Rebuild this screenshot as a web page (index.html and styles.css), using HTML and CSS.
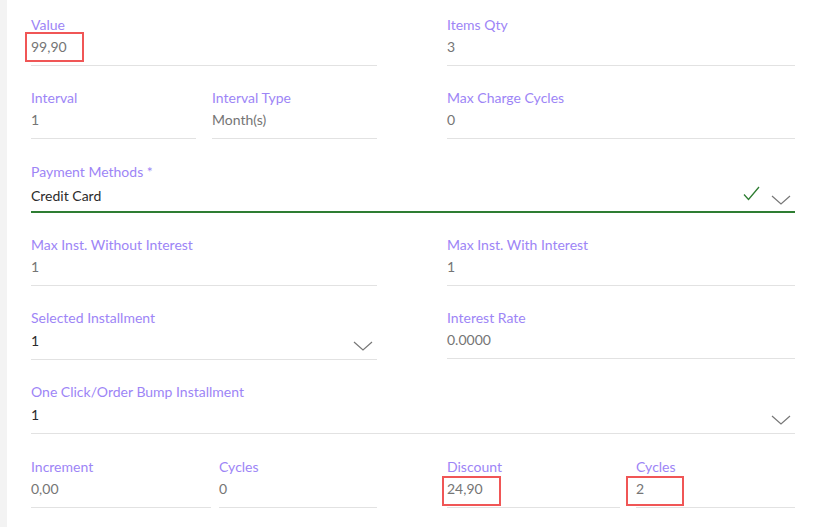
FILE: index.html
```html
<!DOCTYPE html>
<html>
<head>
<meta charset="utf-8">
<link rel="stylesheet" href="styles.css">
</head>
<body>
<div class="page">
  <aside class="strip"></aside>
  <main class="form">
    <div class="field">
      <label class="lbl">Value</label>
      <div class="val"><span class="mark mk-value">99,90</span></div>
    </div>
    <div class="field">
      <label class="lbl">Items Qty</label>
      <div class="val">3</div>
    </div>

    <div class="pair">
      <div class="field w165">
        <label class="lbl">Interval</label>
        <div class="val">1</div>
      </div>
      <div class="field w165">
        <label class="lbl">Interval Type</label>
        <div class="val">Month(s)</div>
      </div>
    </div>
    <div class="field">
      <label class="lbl">Max Charge Cycles</label>
      <div class="val">0</div>
    </div>

    <div class="field full select valid">
      <label class="lbl">Payment Methods *</label>
      <div class="val dark">Credit Card
        <span class="icons">
          <svg class="check" width="17" height="15" viewBox="0 0 17 15"><path d="M1 8.5 L5.5 13.5 L16 1" fill="none" stroke="#2e7d32" stroke-width="1.3"/></svg>
          <svg class="chev" width="20" height="10" viewBox="0 0 20 10"><path d="M1 1 L10 9 L19 1" fill="none" stroke="#777" stroke-width="1.2"/></svg>
        </span>
      </div>
    </div>

    <div class="field">
      <label class="lbl">Max Inst. Without Interest</label>
      <div class="val">1</div>
    </div>
    <div class="field">
      <label class="lbl">Max Inst. With Interest</label>
      <div class="val">1</div>
    </div>

    <div class="field select">
      <label class="lbl">Selected Installment</label>
      <div class="val dark">1
        <span class="icons"><svg class="chev" width="20" height="10" viewBox="0 0 20 10"><path d="M1 1 L10 9 L19 1" fill="none" stroke="#777" stroke-width="1.2"/></svg></span>
      </div>
    </div>
    <div class="field">
      <label class="lbl">Interest Rate</label>
      <div class="val">0.0000</div>
    </div>

    <div class="field full select">
      <label class="lbl">One Click/Order Bump Installment</label>
      <div class="val dark">1
        <span class="icons"><svg class="chev" width="20" height="10" viewBox="0 0 20 10"><path d="M1 1 L10 9 L19 1" fill="none" stroke="#777" stroke-width="1.2"/></svg></span>
      </div>
    </div>

    <div class="pair tight last">
      <div class="field w180">
        <label class="lbl">Increment</label>
        <div class="val">0,00</div>
      </div>
      <div class="field w158">
        <label class="lbl">Cycles</label>
        <div class="val">0</div>
      </div>
    </div>
    <div class="pair last">
      <div class="field w173">
        <label class="lbl">Discount</label>
        <div class="val"><span class="mark mk-discount">24,90</span></div>
      </div>
      <div class="field w159">
        <label class="lbl">Cycles</label>
        <div class="val"><span class="mark mk-cycles">2</span></div>
      </div>
    </div>
  </main>
</div>
</body>
</html>
```

FILE: styles.css
```css
* { box-sizing: border-box; }
html, body { margin: 0; padding: 0; background: #fff; }
body {
  font-family: "Lato", "Open Sans", sans-serif;
  width: 823px;
  height: 527px;
  overflow: hidden;
}
.page { display: flex; height: 527px; }
.strip { width: 7px; background: #f3f3f3; flex: none; }
.form {
  flex: 1;
  padding: 16px 0 0 24px;
  display: grid;
  grid-template-columns: 346px 348px;
  column-gap: 70px;
  row-gap: 23px;
  align-content: start;
}
.full { grid-column: 1 / -1; }
.pair { display: flex; gap: 16px; }
.pair.tight { gap: 8px; }
.pair.last { margin-top: 1px; }
.w165 { width: 165px; }
.w180 { width: 180px; }
.w158 { width: 158px; }
.w173 { width: 173px; }
.w159 { width: 159px; }
.field { display: flex; flex-direction: column; }
.lbl {
  font-size: 14px;
  line-height: 18px;
  color: #9d85f6;
}
.val {
  position: relative;
  height: 32px;
  padding-top: 4px;
  line-height: 18px;
  font-size: 14px;
  color: #757575;
  border-bottom: 1px solid #e2e2e2;
  display: flex;
  align-items: flex-start;
}
.select .val { height: 33px; }
.val.dark { color: #2b2b2b; padding-top: 5px; }
.valid { margin-top: 1px; }
.valid .val { height: 32px; padding-top: 6px; border-bottom: 2px solid #2e7d32; }
.icons {
  margin-left: auto;
  display: flex;
  align-items: flex-start;
  gap: 11px;
  padding-right: 4px;
}
.chev { margin-top: 9px; }
.valid .chev { margin-top: 8px; }
.check { margin-top: -1px; }
.mark { position: relative; display: inline-block; height: 18px; line-height: 18px; }
.mark::after {
  content: "";
  position: absolute;
  border: 2.5px solid #f05656;
}
.mk-value::after { left: -6px; width: 55px; top: -6px; bottom: -6px; }
.mk-discount::after { left: -5px; width: 55px; top: -4px; bottom: -8px; }
.mk-cycles::after { left: -10px; width: 54px; top: -4px; bottom: -8px; }
```
